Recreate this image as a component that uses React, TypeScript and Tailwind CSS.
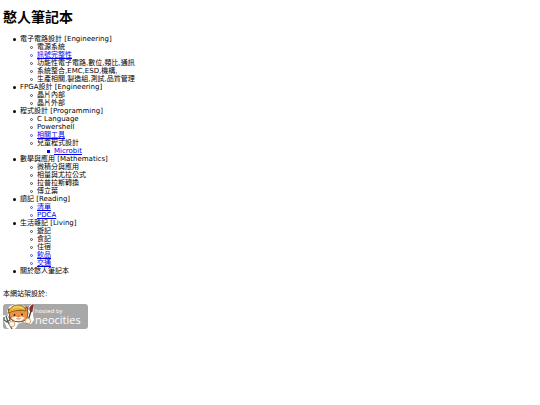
import type { ReactNode } from "react";

type Entry = {
  label: string;
  href?: string;
  children?: Entry[];
};

const TOPICS: Entry[] = [
  {
    label: "電子電路設計 [Engineering]",
    children: [
      { label: "電源系統" },
      { label: "訊號完整性", href: "#signal-integrity" },
      { label: "功能性電子電路,數位,類比,通訊" },
      { label: "系統整合,EMC,ESD,機構," },
      { label: "生產相關,製造組,測試,品質管理" },
    ],
  },
  {
    label: "FPGA設計 [Engineering]",
    children: [{ label: "晶片內部" }, { label: "晶片外部" }],
  },
  {
    label: "程式設計 [Programming]",
    children: [
      { label: "C Language" },
      { label: "Powershell" },
      { label: "相關工具", href: "#tools" },
      {
        label: "兒童程式設計",
        children: [{ label: "Microbit", href: "#microbit" }],
      },
    ],
  },
  {
    label: "數學與應用 [Mathematics]",
    children: [
      { label: "微積分與應用" },
      { label: "相量與尤拉公式" },
      { label: "拉普拉斯轉換" },
      { label: "傅立葉" },
    ],
  },
  {
    label: "讀記 [Reading]",
    children: [
      { label: "清單", href: "#reading-list" },
      { label: "PDCA", href: "#pdca" },
    ],
  },
  {
    label: "生活雜記 [Living]",
    children: [
      { label: "遊記" },
      { label: "食記" },
      { label: "住宿" },
      { label: "飲品", href: "#drinks" },
      { label: "交通", href: "#transport" },
    ],
  },
  { label: "關於憨人筆記本" },
];

// disc, then circle, then square, like a plain nested list
const MARKERS = [
  "before:rounded-full before:bg-current",
  "before:rounded-full before:border before:border-current before:opacity-60",
  "before:bg-current",
];

const MARKER_BOX =
  "before:mr-[4px] before:-ml-[7px] before:inline-block before:size-[3px] before:align-middle before:content-['']";

function TopicList({ entries, depth = 0 }: { entries: Entry[]; depth?: number }) {
  return (
    <ul className="pl-[17px]">
      {entries.map((entry) => {
        let label: ReactNode = entry.label;
        if (entry.href) {
          label = (
            <a href={entry.href} className="underline">
              {entry.label}
            </a>
          );
        }
        return (
          <li
            key={entry.label}
            className={`${MARKER_BOX} ${MARKERS[depth]} ${entry.href ? "text-[#0000ee]" : "text-black"}`}
          >
            {label}
            {entry.children && <TopicList entries={entry.children} depth={depth + 1} />}
          </li>
        );
      })}
    </ul>
  );
}

function NeocitiesCat() {
  return (
    <svg viewBox="0 0 32 26" className="h-[26px] w-8 shrink-0" aria-hidden="true">
      {/* white sticker edge */}
      <path
        d="M4 6 7 2 13 0 20 1 24 5 26 6 26 2 29 0 31 3 30 11 31 16 28 20 23 19 20 18 15 20 13 24 9 26 4 24 0 15 0 11 5 12Z"
        fill="#fff"
      />
      {/* ears and face */}
      <path
        d="M6 9 5 5 10 6 19 6 24 3 25 9 24 14 21 17 16 18 10 17 7 14Z"
        fill="#ee9142"
        stroke="#5c3518"
        strokeWidth=".8"
      />
      <path d="M8 14 12 12.5 15 13 19 12.5 22 14 18 17 12 17Z" fill="#fff0dc" />
      {/* helmet */}
      <path
        d="M5 9C6 4 10 1 15 1s7 2 8 6l-5-1-7 1Z"
        fill="#e5b53a"
        stroke="#7b5719"
        strokeWidth=".8"
      />
      <path d="M10 4C13 2 18 3 20 5" fill="none" stroke="#ffe07a" strokeWidth="1" />
      <circle cx="11.5" cy="11" r=".9" fill="#2e211b" />
      <circle cx="19" cy="10.5" r=".9" fill="#2e211b" />
      <path d="m14.5 12.5 2 0-1 1Z" fill="#8b3c25" />
      <path d="M13.5 14.5q2 1 4 0" fill="none" stroke="#8b3c25" strokeWidth=".6" />
      {/* fork */}
      <path
        d="M1 13v3l3 2 3-2-1-4M3 12l2 6 4 7"
        fill="none"
        stroke="#555"
        strokeWidth="1.3"
      />
      {/* brush */}
      <path d="m24 20 4-13" stroke="#4c3a33" strokeWidth="1.3" />
      <path d="M27 7c-1-3 0-5 2-6s1 4 0 7Z" fill="#9d2722" stroke="#582019" strokeWidth=".5" />
      {/* paws */}
      <circle cx="9" cy="20" r="2.8" fill="#fff4e5" stroke="#c08a50" strokeWidth=".7" />
      <circle cx="25" cy="17" r="2.8" fill="#fff4e5" stroke="#c08a50" strokeWidth=".7" />
    </svg>
  );
}

function NeocitiesBadge() {
  return (
    <a
      href="#neocities"
      className="flex h-[25px] w-[85px] items-center overflow-hidden rounded-[3px] bg-[#a8a8a8] text-white"
    >
      <NeocitiesCat />
      <span className="flex flex-col pb-[3px] font-[family-name:Open_Sans,sans-serif]">
        <span className="text-[6px] leading-[8px]">hosted by</span>
        <span className="text-[11px] leading-[9px]">neocities</span>
      </span>
    </a>
  );
}

export default function App() {
  return (
    <main
      lang="zh-Hant"
      className="min-h-screen bg-white px-[3px] pt-[8px] font-[family-name:DejaVu_Sans,Noto_Sans_CJK_TC,sans-serif] text-[7px] leading-[8px] text-black"
    >
      <h1 className="mb-[9px] text-[14px] leading-[18px] font-bold">憨人筆記本</h1>
      <TopicList entries={TOPICS} />
      <p className="mt-[15px] mb-[6px]">本網站架設於:</p>
      <NeocitiesBadge />
    </main>
  );
}
